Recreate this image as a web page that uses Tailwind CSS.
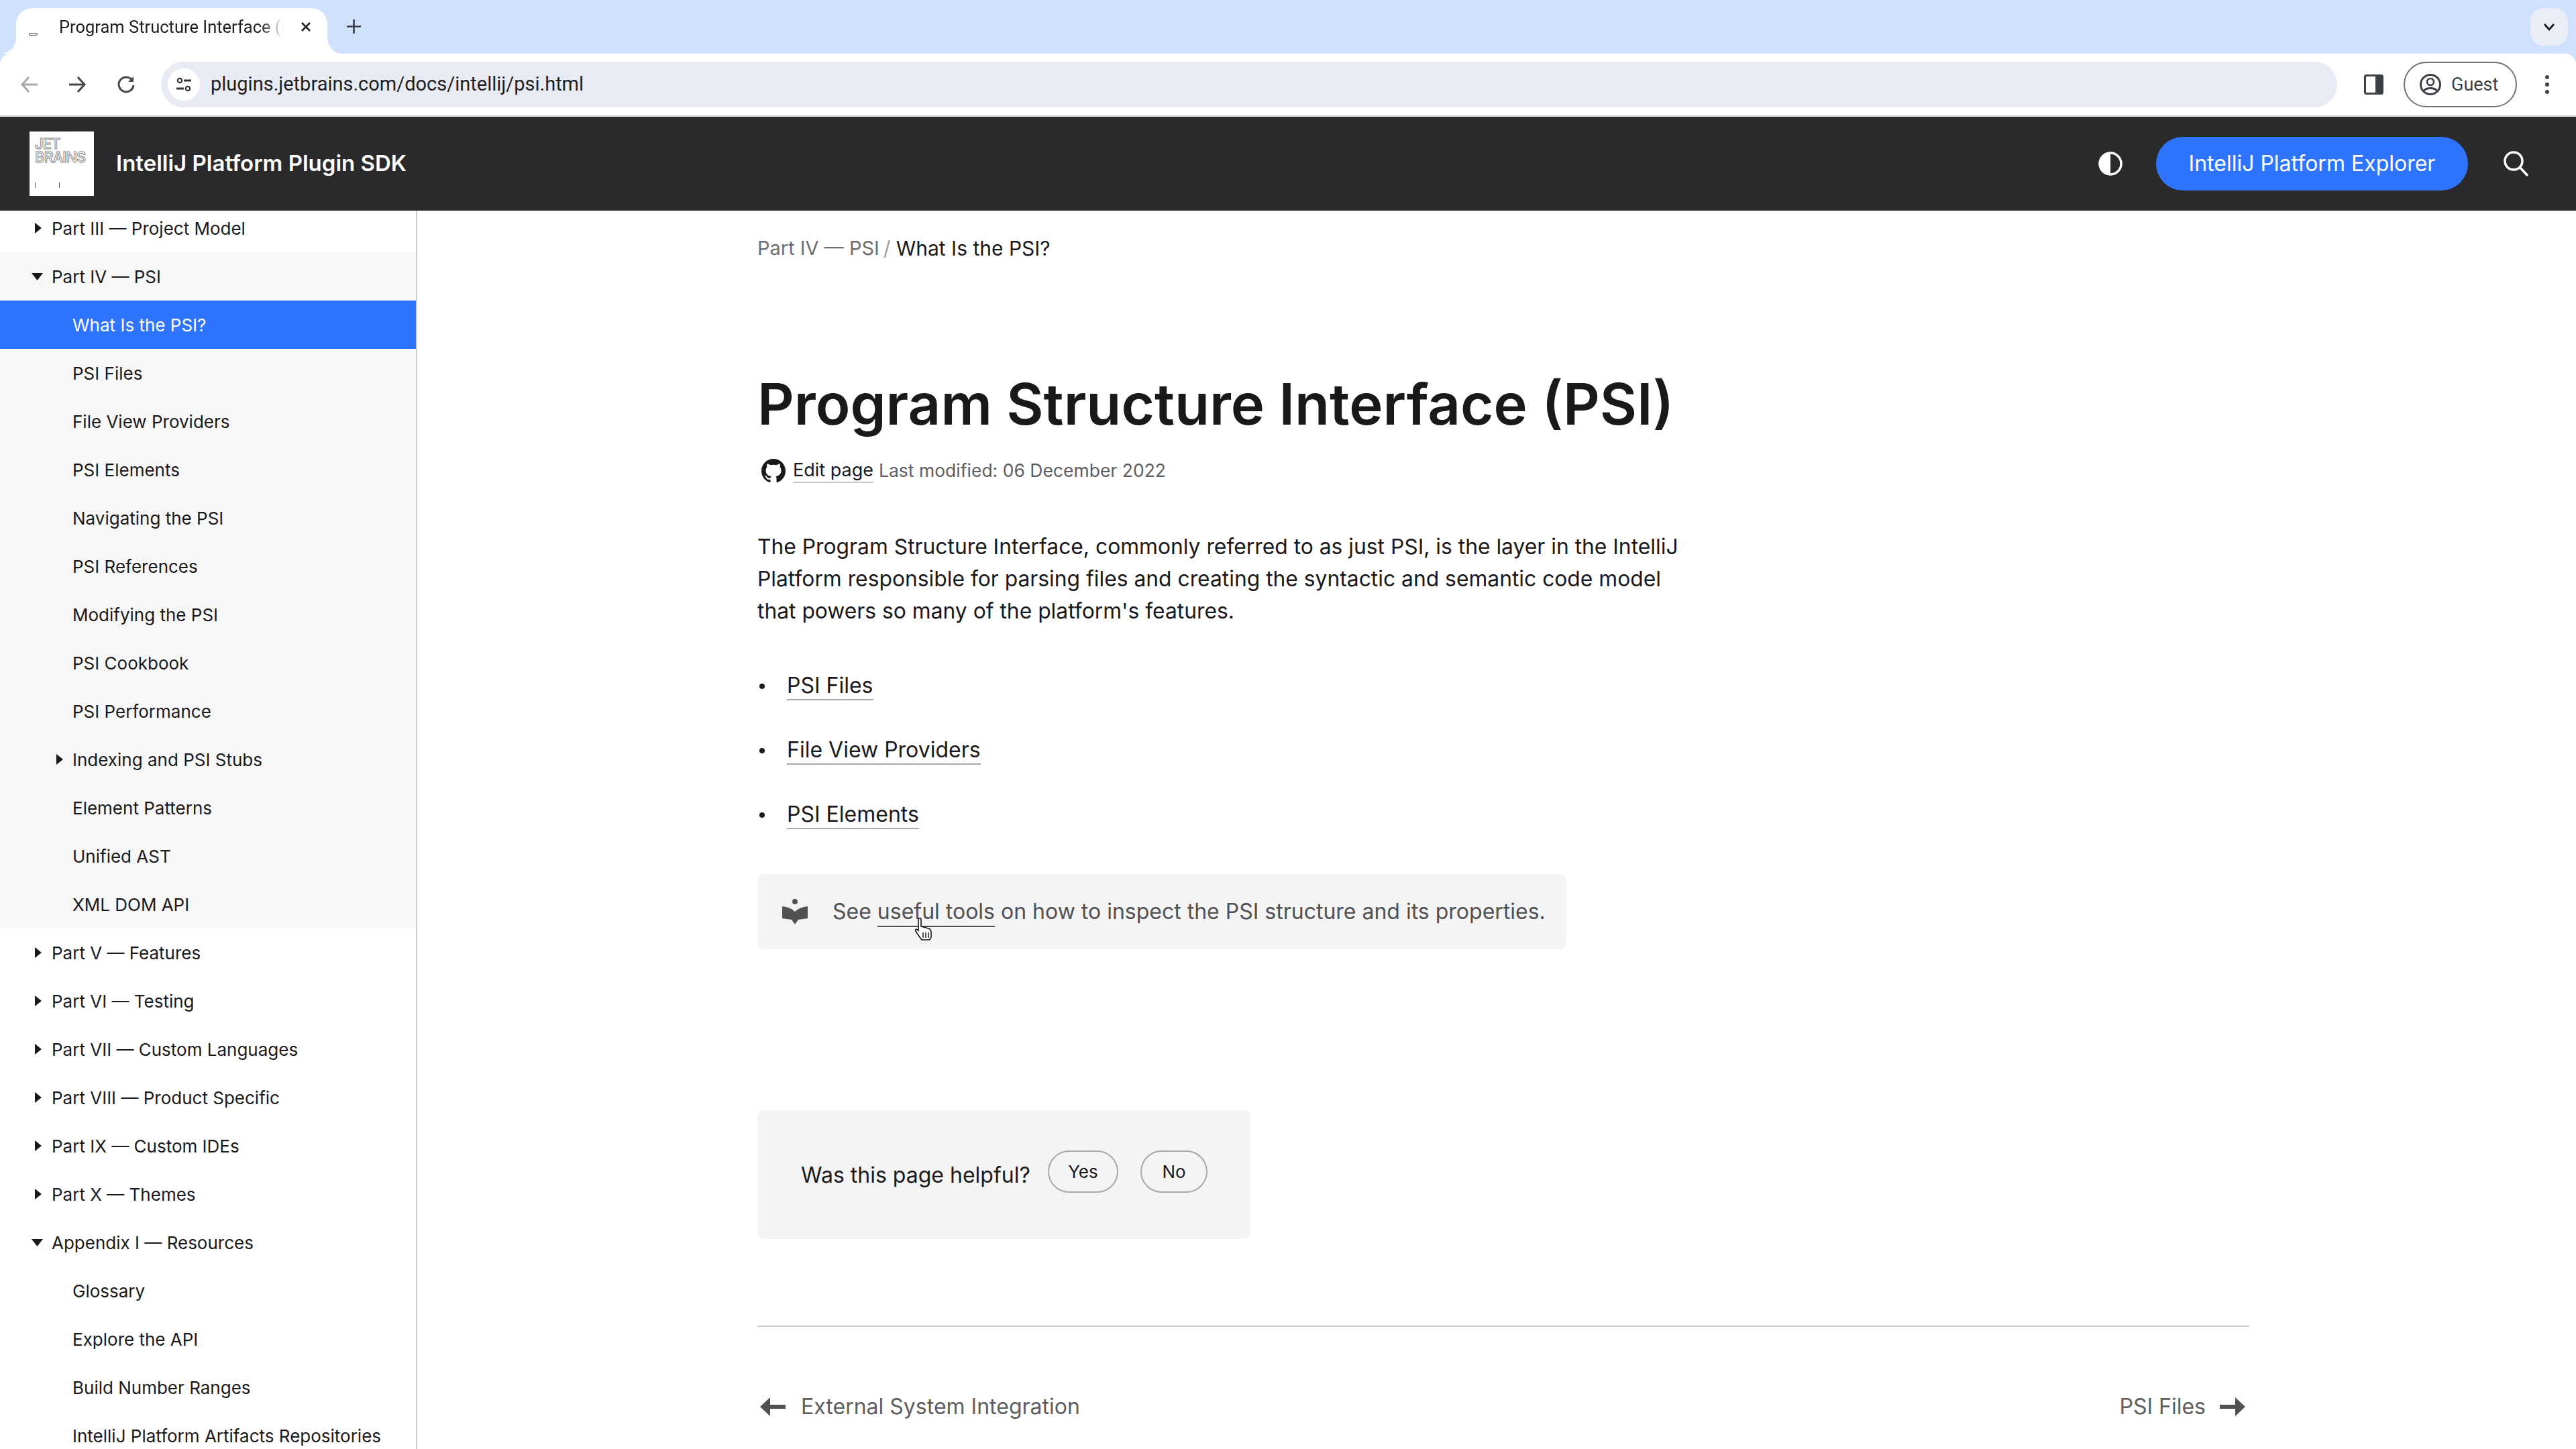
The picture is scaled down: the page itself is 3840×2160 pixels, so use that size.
<!DOCTYPE html>
<html lang="en">
  <head>
    <meta charset="UTF-8" />
    <title>Program Structure Interface (PSI)</title>
    <script src="https://cdn.jsdelivr.net/npm/@tailwindcss/browser@4"></script>
  </head>
  <body class="h-screen overflow-hidden bg-white font-['Inter',sans-serif] text-[#19191c] flex flex-col">
    <!-- browser tab strip -->
    <div class="h-[80px] shrink-0 bg-[#d0e1fd] flex items-end pl-[24px] pr-[12px] relative">
      <div class="relative h-[68px] w-[464px] pb-[12px] bg-white rounded-t-[24px] flex items-center font-['Roboto',sans-serif]">
        <svg class="absolute left-[-24px] bottom-0" width="24" height="24" viewBox="0 0 24 24"><path d="M0 24C14 24 24 14 24 0V24Z" fill="#fff" /></svg>
        <svg class="absolute right-[-24px] bottom-0" width="24" height="24" viewBox="0 0 24 24"><path d="M24 24C10 24 0 14 0 0V24Z" fill="#fff" /></svg>
        <div class="ml-[19px] mt-[22px] w-[13px] h-[4px] rounded-[2px] border border-[#444]"></div>
        <div class="ml-[32px] w-[335px] overflow-hidden whitespace-nowrap text-[25.5px] text-[#222] mask-r-from-[90%] mask-r-to-100%">Program Structure Interface (PSI)</div>
        <svg class="ml-[25px]" width="16" height="16" viewBox="0 0 16 16"><path d="M2 2L14 14M14 2L2 14" stroke="#222" stroke-width="2.6" /></svg>
      </div>
      <svg class="ml-[29px] mb-[30px]" width="21" height="21" viewBox="0 0 21 21"><path d="M10.5 0V21M0 10.5H21" stroke="#3b3f45" stroke-width="2.6" /></svg>
      <div class="ml-auto mb-[12px] w-[56px] h-[56px] rounded-[20px] bg-[#e9edf6] flex items-center justify-center">
        <svg width="18" height="12" viewBox="0 0 18 12"><path d="M2 2L9 10L16 2" fill="none" stroke="#1f1f1f" stroke-width="2.8" /></svg>
      </div>
    </div>

    <!-- browser toolbar -->
    <div class="h-[92px] shrink-0 bg-[#d0e1fd]">
      <div class="h-full bg-white rounded-t-[16px] flex items-center pl-[30px]">
        <svg width="28" height="26" viewBox="0 0 28 26"><path d="M26 13H4M13 2L3 13L13 24" fill="none" stroke="#a8a8a8" stroke-width="3" /></svg>
        <svg class="ml-[43px]" width="28" height="26" viewBox="0 0 28 26"><path d="M2 13H24M15 2L25 13L15 24" fill="none" stroke="#444746" stroke-width="3" /></svg>
        <svg class="ml-[45px]" width="28" height="28" viewBox="0 0 28 28"><path d="M23 7.5A11 11 0 1 0 25 15" fill="none" stroke="#444746" stroke-width="3" /><path d="M25 2V10H17" fill="#444746" /></svg>
        <div class="ml-[38px] w-[3244px] h-[68px] rounded-full bg-[#e8ebf4] flex items-center pl-[10px] shrink-0">
          <div class="w-[48px] h-[48px] rounded-full bg-white flex items-center justify-center">
            <svg width="24" height="24" viewBox="0 0 24 24"><circle cx="6" cy="6" r="3.2" fill="none" stroke="#333" stroke-width="2.2" /><path d="M12 6H23M1 18H12" stroke="#333" stroke-width="3" /><circle cx="18" cy="18" r="3.2" fill="none" stroke="#333" stroke-width="2.2" /></svg>
          </div>
          <span class="ml-[16px] font-['Roboto',sans-serif] text-[29px] text-[#1f1f1f]">plugins.jetbrains.com/docs/intellij/psi.html</span>
        </div>
        <svg class="ml-[40px] shrink-0" width="29" height="30" viewBox="0 0 29 30"><rect x="1.5" y="1.5" width="26" height="27" rx="2" fill="#fff" stroke="#3c3f43" stroke-width="3" /><rect x="17" y="2" width="10" height="26" fill="#3c3f43" /></svg>
        <div class="ml-[30px] shrink-0 w-[169px] h-[68px] rounded-full border-2 border-[#6f7174] flex items-center pl-[22px]">
          <svg width="32" height="34" viewBox="0 0 32 34"><circle cx="16" cy="17" r="14.5" fill="none" stroke="#3c3f43" stroke-width="3" /><circle cx="16" cy="13" r="5" fill="none" stroke="#3c3f43" stroke-width="2.6" /><path d="M6 27C9 21 23 21 26 27" fill="none" stroke="#3c3f43" stroke-width="3" /></svg>
          <span class="ml-[15px] font-['Roboto',sans-serif] text-[27px] text-[#3c3f43]">Guest</span>
        </div>
        <div class="ml-[42px] shrink-0 flex flex-col gap-[5px]">
          <div class="w-[6px] h-[6px] rounded-full bg-[#444746]"></div>
          <div class="w-[6px] h-[6px] rounded-full bg-[#444746]"></div>
          <div class="w-[6px] h-[6px] rounded-full bg-[#444746]"></div>
        </div>
      </div>
    </div>
    <div class="h-[2px] shrink-0 bg-[#dfdfdf]"></div>

    <!-- site header -->
    <header class="h-[140px] shrink-0 bg-[#2a2a2c] flex items-center pl-[44px] relative z-10">
      <div class="w-[96px] h-[96px] bg-white flex flex-col pl-[8px] pt-[8px] text-transparent font-medium text-[22px] leading-[20px] [-webkit-text-stroke:1px_#888] tracking-[-1px]">
        <span>JET</span>
        <span>BRAINS</span>
        <div class="mt-[28px] w-[37px] h-[8px] border-x border-[#555]"></div>
      </div>
      <span class="ml-[33px] text-[33px] font-semibold text-white">IntelliJ Platform Plugin SDK</span>
      <svg class="ml-auto" width="36" height="36" viewBox="0 0 36 36"><circle cx="18" cy="18" r="16" fill="#2a2a2c" stroke="#fff" stroke-width="3.5" /><path d="M18 2A16 16 0 0 0 18 34Z" fill="#fff" /></svg>
      <button class="ml-[50px] w-[465px] h-[80px] rounded-full bg-[#2f74ff] text-white text-[32px]">IntelliJ Platform Explorer</button>
      <svg class="ml-[53px] mr-[70px]" width="38" height="38" viewBox="0 0 38 38"><circle cx="15" cy="15" r="13" fill="none" stroke="#fff" stroke-width="3.5" /><path d="M24 24L36 37" stroke="#fff" stroke-width="3.5" /></svg>
    </header>

    <div class="flex-1 flex min-h-0">
      <!-- doc tree -->
      <nav class="w-[622px] shrink-0 border-r-2 border-[#cfcfcf] overflow-hidden text-[26px]">
        <div class="-mt-[10px]">
          <div class="h-[72px] flex items-center pl-[52px] gap-[15px]"><svg width="10" height="16" viewBox="0 0 10 16"><path d="M0 0L10 8L0 16Z" fill="#19191c" /></svg>Part III — Project Model</div>
          <div class="bg-[#f7f7f7]">
            <div class="h-[72px] flex items-center pl-[47px] gap-[13px]"><svg width="17" height="11" viewBox="0 0 17 11"><path d="M0 0H17L8.5 11Z" fill="#19191c" /></svg>Part IV — PSI</div>
            <div class="h-[72px] flex items-center pl-[108px] bg-[#2f74ff] text-white">What Is the PSI?</div>
            <div class="h-[72px] flex items-center pl-[108px]">PSI Files</div>
            <div class="h-[72px] flex items-center pl-[108px]">File View Providers</div>
            <div class="h-[72px] flex items-center pl-[108px]">PSI Elements</div>
            <div class="h-[72px] flex items-center pl-[108px]">Navigating the PSI</div>
            <div class="h-[72px] flex items-center pl-[108px]">PSI References</div>
            <div class="h-[72px] flex items-center pl-[108px]">Modifying the PSI</div>
            <div class="h-[72px] flex items-center pl-[108px]">PSI Cookbook</div>
            <div class="h-[72px] flex items-center pl-[108px]">PSI Performance</div>
            <div class="h-[72px] flex items-center pl-[84px] gap-[14px]"><svg width="10" height="16" viewBox="0 0 10 16"><path d="M0 0L10 8L0 16Z" fill="#19191c" /></svg>Indexing and PSI Stubs</div>
            <div class="h-[72px] flex items-center pl-[108px]">Element Patterns</div>
            <div class="h-[72px] flex items-center pl-[108px]">Unified AST</div>
            <div class="h-[72px] flex items-center pl-[108px]">XML DOM API</div>
          </div>
          <div class="h-[72px] flex items-center pl-[52px] gap-[15px]"><svg width="10" height="16" viewBox="0 0 10 16"><path d="M0 0L10 8L0 16Z" fill="#19191c" /></svg>Part V — Features</div>
          <div class="h-[72px] flex items-center pl-[52px] gap-[15px]"><svg width="10" height="16" viewBox="0 0 10 16"><path d="M0 0L10 8L0 16Z" fill="#19191c" /></svg>Part VI — Testing</div>
          <div class="h-[72px] flex items-center pl-[52px] gap-[15px]"><svg width="10" height="16" viewBox="0 0 10 16"><path d="M0 0L10 8L0 16Z" fill="#19191c" /></svg>Part VII — Custom Languages</div>
          <div class="h-[72px] flex items-center pl-[52px] gap-[15px]"><svg width="10" height="16" viewBox="0 0 10 16"><path d="M0 0L10 8L0 16Z" fill="#19191c" /></svg>Part VIII — Product Specific</div>
          <div class="h-[72px] flex items-center pl-[52px] gap-[15px]"><svg width="10" height="16" viewBox="0 0 10 16"><path d="M0 0L10 8L0 16Z" fill="#19191c" /></svg>Part IX — Custom IDEs</div>
          <div class="h-[72px] flex items-center pl-[52px] gap-[15px]"><svg width="10" height="16" viewBox="0 0 10 16"><path d="M0 0L10 8L0 16Z" fill="#19191c" /></svg>Part X — Themes</div>
          <div class="h-[72px] flex items-center pl-[47px] gap-[13px]"><svg width="17" height="11" viewBox="0 0 17 11"><path d="M0 0H17L8.5 11Z" fill="#19191c" /></svg>Appendix I — Resources</div>
          <div class="h-[72px] flex items-center pl-[108px]">Glossary</div>
          <div class="h-[72px] flex items-center pl-[108px]">Explore the API</div>
          <div class="h-[72px] flex items-center pl-[108px]">Build Number Ranges</div>
          <div class="h-[72px] flex items-center pl-[108px]">IntelliJ Platform Artifacts Repositories</div>
        </div>
      </nav>

      <!-- article -->
      <main class="flex-1 pl-[507px] pt-[36px] overflow-hidden">
        <div class="w-[2224px]">
          <div class="h-[40px] flex items-center text-[30px] text-[#6d6d70]"><span class="text-[29px]">Part IV — PSI</span><span class="mx-[6px] text-[#a0a0a0]">/</span><span class="ml-[2px] text-[#19191c]">What Is the PSI?</span></div>
          <h1 class="mt-[163px] text-[85px] leading-[100px] font-semibold">Program Structure Interface (PSI)</h1>
          <div class="mt-[29px] h-[40px] flex items-center text-[26.5px] text-[#5e5e60] pl-[6px]">
            <svg width="36" height="36" viewBox="0 0 16 16"><path fill="#19191c" d="M8 0C3.58 0 0 3.58 0 8c0 3.54 2.29 6.53 5.47 7.59.4.07.55-.17.55-.38 0-.19-.01-.82-.01-1.49-2.01.37-2.53-.49-2.69-.94-.09-.23-.48-.94-.82-1.13-.28-.15-.68-.52-.01-.53.63-.01 1.08.58 1.23.82.72 1.21 1.87.87 2.33.66.07-.52.28-.87.51-1.07-1.78-.2-3.64-.89-3.64-3.95 0-.87.31-1.59.82-2.15-.08-.2-.36-1.02.08-2.12 0 0 .67-.21 2.2.82.64-.18 1.32-.27 2-.27.68 0 1.36.09 2 .27 1.53-1.04 2.2-.82 2.2-.82.44 1.1.16 1.92.08 2.12.51.56.82 1.27.82 2.15 0 3.07-1.87 3.75-3.65 3.95.29.25.54.73.54 1.48 0 1.07-.01 1.93-.01 2.2 0 .21.15.46.55.38A8.013 8.013 0 0016 8c0-4.42-3.58-8-8-8z" /></svg>
            <a class="ml-[11px] text-[27px] text-[#19191c] border-b-2 border-[#c8c8c8] leading-[34px]">Edit page</a>
            <span class="ml-[8px]">Last modified: 06 December 2022</span>
          </div>
          <p class="mt-[69px] w-[1400px] text-[31.8px] leading-[48px]">The Program Structure Interface, commonly referred to as just PSI, is the layer in the IntelliJ Platform responsible for parsing files and creating the syntactic and semantic code model that powers so many of the platform's features.</p>
          <ul class="mt-[64px] flex flex-col gap-[48px] text-[32px]">
            <li class="h-[48px] flex items-center"><span class="w-[8px] h-[8px] ml-[3px] rounded-full bg-[#19191c]"></span><a class="ml-[33px] border-b-2 border-[#a8a8a8] leading-[40px]">PSI Files</a></li>
            <li class="h-[48px] flex items-center"><span class="w-[8px] h-[8px] ml-[3px] rounded-full bg-[#19191c]"></span><a class="ml-[33px] border-b-2 border-[#a8a8a8] leading-[40px]">File View Providers</a></li>
            <li class="h-[48px] flex items-center"><span class="w-[8px] h-[8px] ml-[3px] rounded-full bg-[#19191c]"></span><a class="ml-[33px] border-b-2 border-[#a8a8a8] leading-[40px]">PSI Elements</a></li>
          </ul>
          <div class="relative mt-[64px] w-[1206px] h-[112px] rounded-[10px] bg-[#f4f4f4] flex items-center pl-[37px] text-[32px] text-[#515153]">
            <svg width="38" height="38" viewBox="0 0 38 38"><circle cx="19" cy="4" r="4" fill="#515153" /><path d="M0 11Q12 12 19 19Q26 12 38 11V29L24 31L19 38L14 31L0 29Z" fill="#515153" /></svg>
            <span class="ml-[37px]">See <a class="border-b-2 border-[#515153] pb-[2px]">useful tools</a> on how to inspect the PSI structure and its properties.</span>
            <!-- mouse pointer over the link -->
            <svg class="absolute left-[233px] top-[64px]" width="30" height="36" viewBox="0 0 30 36"><path d="M8 2C10 1 11 2 11 4V14L22 17C25 18 26 20 26 23V30L24 34H12L9 30L3 21C2 18 4 17 7 20V3Z" fill="#fff" stroke="#111" stroke-width="1.6" /><path d="M14 23V31M18 23V31M22 23V31" stroke="#111" stroke-width="1.4" /></svg>
          </div>
          <div class="mt-[240px] w-[735px] h-[192px] rounded-[10px] bg-[#f4f4f4] flex items-start pl-[65px] pt-[60px]">
            <span class="mt-[17px] text-[32px] leading-[40px] w-[368px]">Was this page helpful?</span>
            <button class="w-[105px] h-[63px] rounded-full border-2 border-[#a8a8a8] text-[26px]">Yes</button>
            <button class="ml-[33px] w-[100px] h-[63px] rounded-full border-2 border-[#a8a8a8] text-[26px]">No</button>
          </div>
          <div class="mt-[129px] h-[2px] bg-[#c8c8c8]"></div>
          <div class="mt-[95px] h-[48px] flex items-center justify-between px-[4px] text-[32px] text-[#5e5e60]">
            <div class="flex items-center">
              <svg width="38" height="28" viewBox="0 0 38 28"><path d="M0 14L15 0V11H38V17H15V28Z" fill="#515153" /></svg>
              <span class="ml-[23px]">External System Integration</span>
            </div>
            <div class="flex items-center">
              <span>PSI Files</span>
              <svg class="ml-[21px] mr-[2px]" width="38" height="28" viewBox="0 0 38 28"><path d="M38 14L23 0V11H0V17H23V28Z" fill="#515153" /></svg>
            </div>
          </div>
        </div>
      </main>
    </div>
  </body>
</html>
